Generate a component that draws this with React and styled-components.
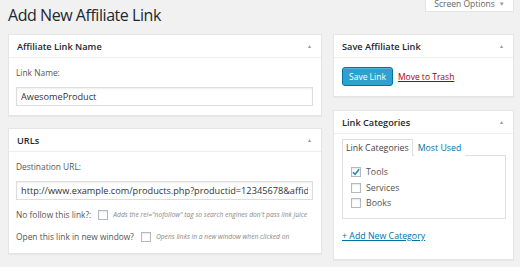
import React from "react";
import styled, { createGlobalStyle } from "styled-components";

const GlobalStyle = createGlobalStyle`
  html, body {
    margin: 0;
    padding: 0;
    background: #f1f1f1;
    font-family: "Open Sans", "Liberation Sans", sans-serif;
    color: #444;
    overflow: hidden;
  }
`;

export default function App() {
  return (
    <>
      <GlobalStyle />
      <Page>
        <Header>
          <Title>Add New Affiliate Link</Title>
          <ScreenOptions>
            Screen Options <span>▼</span>
          </ScreenOptions>
        </Header>
        <Columns>
          <Column>
            <Panel>
              <PanelHeader>
                Affiliate Link Name
                <Toggle>▲</Toggle>
              </PanelHeader>
              <PanelBody>
                <Label>Link Name:</Label>
                <TextInput readOnly value="AwesomeProduct" />
              </PanelBody>
            </Panel>
            <Panel>
              <PanelHeader>
                URLs
                <Toggle>▲</Toggle>
              </PanelHeader>
              <PanelBody>
                <Label>Destination URL:</Label>
                <TextInput
                  readOnly
                  value="http://www.example.com/products.php?productid=12345678&affid=abc"
                />
                <OptionRow>
                  <span>No follow this link?:</span>
                  <Box />
                  <Hint>
                    Adds the rel="nofollow" tag so search engines don't pass link juice
                  </Hint>
                </OptionRow>
                <OptionRow>
                  <span>Open this link in new window?</span>
                  <Box />
                  <Hint>Opens links in a new window when clicked on</Hint>
                </OptionRow>
              </PanelBody>
            </Panel>
          </Column>
          <Column side>
            <Panel>
              <PanelHeader>
                Save Affiliate Link
                <Toggle>▲</Toggle>
              </PanelHeader>
              <ActionBody>
                <SaveButton>Save Link</SaveButton>
                <TrashLink>Move to Trash</TrashLink>
              </ActionBody>
            </Panel>
            <Panel>
              <PanelHeader>
                Link Categories
                <Toggle>▲</Toggle>
              </PanelHeader>
              <CatBody>
                <Tabs>
                  <Tab active>Link Categories</Tab>
                  <Tab>Most Used</Tab>
                </Tabs>
                <CatList>
                  <CatItem>
                    <Box>
                      <svg width="9" height="8" viewBox="0 0 9 8">
                        <path
                          d="M1 4.2 L3.5 6.6 L8 1"
                          fill="none"
                          stroke="#1e8cbe"
                          strokeWidth="1.7"
                        />
                      </svg>
                    </Box>
                    Tools
                  </CatItem>
                  <CatItem>
                    <Box />
                    Services
                  </CatItem>
                  <CatItem>
                    <Box />
                    Books
                  </CatItem>
                </CatList>
                <AddLink>+ Add New Category</AddLink>
              </CatBody>
            </Panel>
          </Column>
        </Columns>
      </Page>
    </>
  );
}

const Page = styled.div`
  width: 520px;
  height: 267px;
  padding: 0 6px 0 8px;
  box-sizing: border-box;
`;

const Header = styled.div`
  display: flex;
  justify-content: space-between;
  align-items: flex-start;
  height: 34px;
`;

const Title = styled.h1`
  margin: 4px 0 0;
  font-size: 16px;
  font-weight: 400;
  color: #23282d;
  letter-spacing: -0.45px;
  line-height: 22px;
`;

const ScreenOptions = styled.div`
  margin-top: -4px;
  height: 16px;
  width: 89px;
  box-sizing: border-box;
  background: #fff;
  border: 1px solid #e5e5e5;
  border-top: none;
  font-size: 8.5px;
  color: #666;
  display: flex;
  align-items: center;
  justify-content: center;
  gap: 4px;
  & > span {
    font-size: 6px;
    color: #999;
  }
`;

const Columns = styled.div`
  display: flex;
  gap: 11px;
`;

const Column = styled.div`
  width: ${(p) => (p.side ? "181px" : "314px")};
  display: flex;
  flex-direction: column;
  gap: ${(p) => (p.side ? "13px" : "12px")};
`;

const Panel = styled.div`
  background: #fff;
  border: 1px solid #e5e5e5;
  box-shadow: 0 1px 1px rgba(0, 0, 0, 0.04);
`;

const PanelHeader = styled.div`
  height: 22px;
  border-bottom: 1px solid #eee;
  padding: 0 9px 0 8px;
  display: flex;
  align-items: center;
  justify-content: space-between;
  font-size: 9.2px;
  font-weight: 600;
  color: #23282d;
`;

const Toggle = styled.span`
  font-size: 5px;
  color: #999;
`;

const PanelBody = styled.div`
  padding: 9px 8px 9px 7px;
  display: flex;
  flex-direction: column;
`;

const Label = styled.div`
  font-size: 8.4px;
  line-height: 12px;
  color: #555;
  margin-bottom: 8px;
`;

const TextInput = styled.input`
  height: 19px;
  box-sizing: border-box;
  border: 1px solid #ddd;
  box-shadow: inset 0 1px 2px rgba(0, 0, 0, 0.07);
  padding: 0 4px;
  font-family: "Open Sans", "Liberation Sans", sans-serif;
  font-size: 9.2px;
  color: #333;
  outline: none;
  margin: 0;
`;

const OptionRow = styled.div`
  display: flex;
  align-items: center;
  gap: 5px;
  margin-top: 7px;
  font-size: 8.4px;
  color: #555;
  height: 15px;
  &:first-of-type {
    margin-top: 8px;
  }
`;

const Box = styled.span`
  width: 10px;
  height: 10px;
  box-sizing: border-box;
  border: 1px solid #b4b9be;
  box-shadow: inset 0 1px 2px rgba(0, 0, 0, 0.1);
  background: #fff;
  display: inline-flex;
  align-items: center;
  justify-content: center;
  flex-shrink: 0;
  margin-left: 2px;
`;

const Hint = styled.span`
  font-size: 6.7px;
  font-style: italic;
  color: #888;
`;

const ActionBody = styled.div`
  padding: 9px 8px 10px 8px;
  display: flex;
  align-items: center;
  gap: 5px;
`;

const SaveButton = styled.button`
  height: 19px;
  padding: 0 6px;
  border: 1px solid #0074a2;
  border-radius: 3px;
  background: #2ea2cc;
  color: #fff;
  font-family: "Open Sans", "Liberation Sans", sans-serif;
  font-size: 8.5px;
  box-shadow: inset 0 1px 0 rgba(120, 200, 230, 0.5);
`;

const TrashLink = styled.a`
  font-size: 8.5px;
  color: #a00;
  text-decoration: underline;
`;

const CatBody = styled.div`
  padding: 5px 7px 17px 8px;
`;

const Tabs = styled.div`
  display: flex;
  align-items: flex-end;
  gap: 1px;
`;

const Tab = styled.div`
  height: 17px;
  box-sizing: border-box;
  padding: 0 3px;
  font-size: 8.8px;
  display: flex;
  align-items: center;
  color: ${(p) => (p.active ? "#444" : "#0074a2")};
  border: 1px solid ${(p) => (p.active ? "#dfdfdf" : "transparent")};
  border-bottom: none;
  background: #fff;
  position: relative;
  margin-bottom: -1px;
`;

const CatList = styled.div`
  border: 1px solid #dfdfdf;
  height: 64px;
  box-sizing: border-box;
  padding: 11px 8px;
  display: flex;
  flex-direction: column;
  gap: 5.5px;
`;

const CatItem = styled.div`
  display: flex;
  align-items: center;
  gap: 5px;
  font-size: 8.8px;
  color: #555;
  height: 10px;
  & > span {
    margin-left: 0;
  }
`;

const AddLink = styled.a`
  display: block;
  margin-top: 11px;
  font-size: 8.8px;
  color: #0074a2;
  text-decoration: underline;
`;
